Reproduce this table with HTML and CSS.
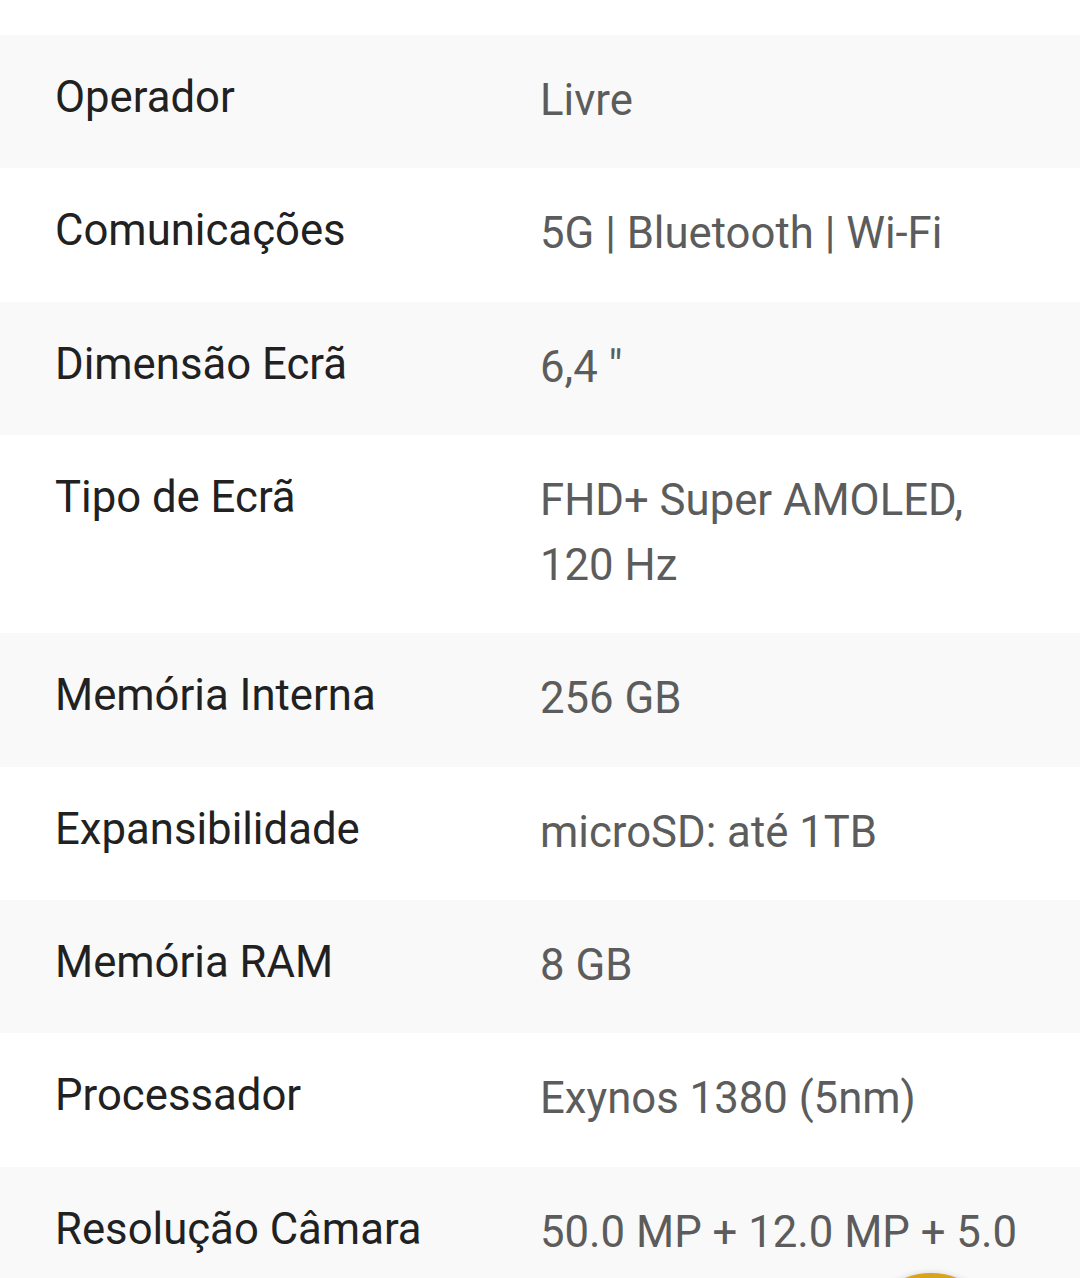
FILE: index.html
```html
<!DOCTYPE html>
<html lang="pt">
<head>
<meta charset="utf-8">
<link rel="stylesheet" href="styles.css">
</head>
<body>
<div class="page">
  <div class="specs">
    <div class="row"><div class="label">Operador</div><div class="value">Livre</div></div>
    <div class="row"><div class="label">Comunicações</div><div class="value">5G | Bluetooth | Wi-Fi</div></div>
    <div class="row"><div class="label">Dimensão Ecrã</div><div class="value">6,4 "</div></div>
    <div class="row"><div class="label">Tipo de Ecrã</div><div class="value">FHD+ Super AMOLED, 120 Hz</div></div>
    <div class="row"><div class="label">Memória Interna</div><div class="value">256 GB</div></div>
    <div class="row"><div class="label">Expansibilidade</div><div class="value">microSD: até 1TB</div></div>
    <div class="row"><div class="label">Memória RAM</div><div class="value">8 GB</div></div>
    <div class="row"><div class="label">Processador</div><div class="value">Exynos 1380 (5nm)</div></div>
    <div class="row"><div class="label">Resolução Câmara</div><div class="value">50.0 MP + 12.0 MP + 5.0 MP</div></div>
  </div>
  <div class="fab"></div>
</div>
</body>
</html>
```
FILE: styles.css
```css
html, body {
  margin: 0;
  padding: 0;
  background: #ffffff;
}
body {
  font-family: Roboto, "Noto Sans", sans-serif;
  overflow: hidden;
  height: 1278px;
}
.page {
  position: relative;
  height: 1278px;
  overflow: hidden;
  padding-top: 35px;
  box-sizing: border-box;
}
.specs {
  display: flex;
  flex-direction: column;
}
.row {
  display: grid;
  grid-template-columns: 486px 1fr;
  padding: 33px 45px 35px 55px;
  background: #ffffff;
}
.row:nth-child(odd) {
  background: #f9f9f9;
}
.label {
  font-size: 43.7px;
  line-height: 56px;
  color: #212121;
  margin-top: 1px;
}
.value {
  font-size: 43.7px;
  line-height: 65.3px;
  color: #5c5c5c;
  margin-left: -1px;
}
.fab {
  position: absolute;
  left: 861px;
  top: 1273px;
  width: 140px;
  height: 140px;
  border-radius: 50%;
  background: #d9a41c;
  box-shadow: 0 0 6px rgba(0,0,0,0.15);
}
```
